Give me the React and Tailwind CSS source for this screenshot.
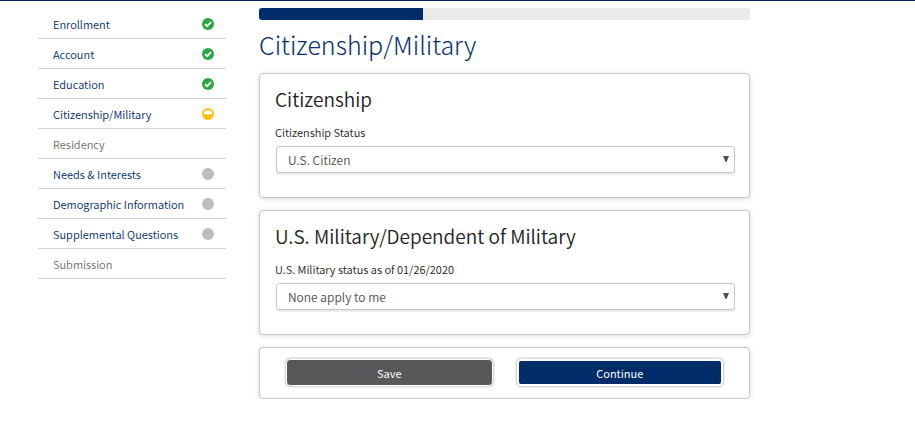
import React from "react";

const steps = [
  { label: "Enrollment", status: "done" },
  { label: "Account", status: "done" },
  { label: "Education", status: "done" },
  { label: "Citizenship/Military", status: "current" },
  { label: "Residency", status: "locked" },
  { label: "Needs & Interests", status: "open" },
  { label: "Demographic Information", status: "open" },
  { label: "Supplemental Questions", status: "open" },
  { label: "Submission", status: "locked" },
];

function StatusIcon({ status }) {
  if (status === "locked") return null;
  return (
    <svg viewBox="0 0 12 12" className="size-3 shrink-0" aria-hidden="true">
      {status === "done" && (
        <>
          <circle cx="6" cy="6" r="6" fill="#28a745" />
          <path d="M3 6.2 5.1 8.2 9.1 4.1" fill="none" stroke="#fff" strokeWidth="1.8" />
        </>
      )}
      {status === "current" && (
        <>
          <circle cx="6" cy="6" r="6" fill="#fdc010" />
          <path d="M1.8 6.2a4.2 4.2 0 0 1 8.4 0Z" fill="#fff" />
        </>
      )}
      {status === "open" && <circle cx="6" cy="6" r="6" fill="#bdbdbd" />}
    </svg>
  );
}

function Step({ label, status }) {
  return (
    <li className="flex h-[30px] items-center justify-between border-b border-[#d2d2d2] pr-3 pl-[15px]">
      {status === "locked" ? (
        <span className="text-[#6c6c6c]">{label}</span>
      ) : (
        <a href="#" className="text-[#002d6a]">{label}</a>
      )}
      <StatusIcon status={status} />
    </li>
  );
}

function Question({ title, id, label, options }) {
  return (
    <section className="rounded-[4px] border border-[#c8c8c8] bg-white px-[15px] pt-[11px] pb-6 shadow-[0_1px_5px_rgba(0,0,0,0.14)]">
      <h2 className="text-[19px] leading-7 font-[350] text-[#222222]">{title}</h2>
      <label htmlFor={id} className="mt-[11px] block text-[11px] leading-4 font-[350] text-[#222222]">
        {label}
      </label>
      <div className="relative mt-1.5 -mr-px pl-px">
        <select
          id={id}
          className="block h-[27px] w-full appearance-none rounded-[3px] border border-[#c5c5c5] bg-white px-[11px] text-[12px] leading-5 font-[350] text-[#4c4c4c] shadow-[0_2px_1px_rgba(0,0,0,0.08)]"
        >
          {options.map((option) => (
            <option key={option}>{option}</option>
          ))}
        </select>
        <svg viewBox="0 0 6 6" className="pointer-events-none absolute top-[10px] right-[6px] size-1.5" aria-hidden="true">
          <path d="M0 0h6L3.5 6h-1Z" fill="#4c4c4c" />
        </svg>
      </div>
    </section>
  );
}

export default function App() {
  return (
    <div className="border-t border-[#00205b] bg-white font-['Noto_Sans_CJK_SC','Noto_Sans',sans-serif]">
      <div className="flex gap-[33px] pt-2 pr-[165px] pl-[38px]">
        <nav className="w-[188px] shrink-0 text-[11px] leading-4 font-[350]" aria-label="Application steps">
          <ul>
            {steps.map((step) => (
              <Step key={step.label} {...step} />
            ))}
          </ul>
        </nav>
        <main className="min-w-0 flex-1">
          <div className="-mt-px h-3 overflow-hidden rounded-[3px] bg-[#ebeae8]" role="progressbar" aria-label="Application progress" aria-valuenow={33} aria-valuemin={0} aria-valuemax={100}>
            <div className="h-full w-1/3 bg-[#002d6a]" />
          </div>
          <h1 className="mt-1.5 text-[25px] leading-9 font-light text-[#002d6a]">Citizenship/Military</h1>
          <form className="mt-[11px] flex flex-col gap-3" onSubmit={(event) => event.preventDefault()}>
            <Question title="Citizenship" id="citizenship" label="Citizenship Status" options={["U.S. Citizen"]} />
            <Question
              title="U.S. Military/Dependent of Military"
              id="military"
              label="U.S. Military status as of 01/26/2020"
              options={["None apply to me"]}
            />
            <div className="grid grid-cols-2 gap-6 rounded-[4px] border border-[#c8c8c8] px-[26px] pt-[11px] pb-3 text-[11px] leading-4 text-white shadow-[0_1px_5px_rgba(0,0,0,0.14)]">
              <button type="submit" className="h-[27px] rounded-[4px] border border-white bg-[#555759] shadow-[0_0_3px_rgba(0,0,0,0.45)]">
                Save
              </button>
              <button type="submit" className="h-[27px] rounded-[4px] border-2 border-white bg-[#002d6a] shadow-[0_0_3px_rgba(0,0,0,0.45)]">
                Continue
              </button>
            </div>
          </form>
        </main>
      </div>
    </div>
  );
}
